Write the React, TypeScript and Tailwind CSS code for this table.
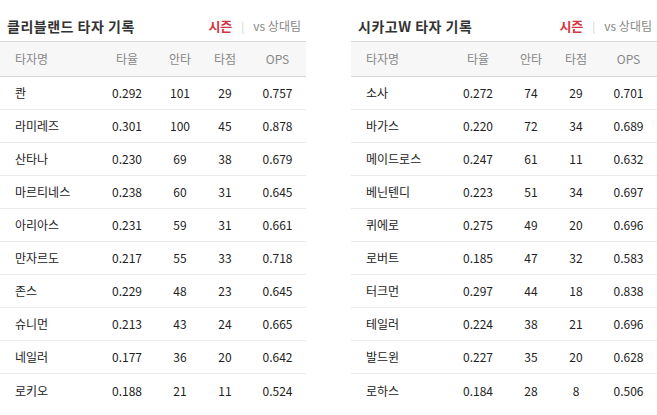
import React from 'react';

type Row = [string, string, number, number, string];

const teams: { title: string; rows: Row[] }[] = [
  {
    title: '클리블랜드 타자 기록',
    rows: [
      ['콴', '0.292', 101, 29, '0.757'],
      ['라미레즈', '0.301', 100, 45, '0.878'],
      ['산타나', '0.230', 69, 38, '0.679'],
      ['마르티네스', '0.238', 60, 31, '0.645'],
      ['아리아스', '0.231', 59, 31, '0.661'],
      ['만자르도', '0.217', 55, 33, '0.718'],
      ['존스', '0.229', 48, 23, '0.645'],
      ['슈니먼', '0.213', 43, 24, '0.665'],
      ['네일러', '0.177', 36, 20, '0.642'],
      ['로키오', '0.188', 21, 11, '0.524'],
    ],
  },
  {
    title: '시카고W 타자 기록',
    rows: [
      ['소사', '0.272', 74, 29, '0.701'],
      ['바가스', '0.220', 72, 34, '0.689'],
      ['메이드로스', '0.247', 61, 11, '0.632'],
      ['베닌텐디', '0.223', 51, 34, '0.697'],
      ['퀴에로', '0.275', 49, 20, '0.696'],
      ['로버트', '0.185', 47, 32, '0.583'],
      ['터크먼', '0.297', 44, 18, '0.838'],
      ['테일러', '0.224', 38, 21, '0.696'],
      ['발드윈', '0.227', 35, 20, '0.628'],
      ['로하스', '0.184', 28, 8, '0.506'],
    ],
  },
];

const font = { fontFamily: '"Noto Sans CJK KR", "Noto Sans", sans-serif' };

// columns: name | avg | hits | rbi | ops
const cols = 'grid grid-cols-[95px_64px_42px_48px_1fr] items-center';

const StatTable = ({ title, rows }: { title: string; rows: Row[] }) => (
  <div className="w-[306px]">
    <div className="h-[41px] flex items-end justify-between pl-[7px] pr-[5px] pb-[6px]">
      <h2 className="text-[14px] font-bold text-[#333] tracking-[0.5px] leading-[18px]">{title}</h2>
      <div className="flex items-center leading-[18px]">
        <span className="text-[13px] font-bold text-[#d6333d]">시즌</span>
        <span className="ml-[9px] mr-[9px] text-[#ccc] text-[11px]">|</span>
        <span className="text-[12px] text-[#888]">vs 상대팀</span>
      </div>
    </div>
    <div className={`${cols} h-[36px] bg-[#f7f7f7] border-y border-[#d8d8d8] text-[12px] text-[#888] leading-[16px]`}>
      <div className="pl-[15px]">타자명</div>
      <div className="text-center">타율</div>
      <div className="text-center">안타</div>
      <div className="text-center">타점</div>
      <div className="text-center">OPS</div>
    </div>
    {rows.map((r, i) => (
      <div
        key={r[0]}
        className={`${cols} h-[33px] text-[12px] text-[#222] leading-[16px] ${
          i < rows.length - 1 ? 'border-b border-[#ebebeb]' : ''
        }`}
      >
        <div className="pl-[15px]">{r[0]}</div>
        <div className="text-center">{r[1]}</div>
        <div className="text-center">{r[2]}</div>
        <div className="text-center">{r[3]}</div>
        <div className="text-center">{r[4]}</div>
      </div>
    ))}
  </div>
);

export default function App() {
  return (
    <div className="w-[657px] h-[415px] bg-white flex gap-[45px]" style={font}>
      {teams.map((t) => (
        <StatTable key={t.title} title={t.title} rows={t.rows} />
      ))}
    </div>
  );
}
